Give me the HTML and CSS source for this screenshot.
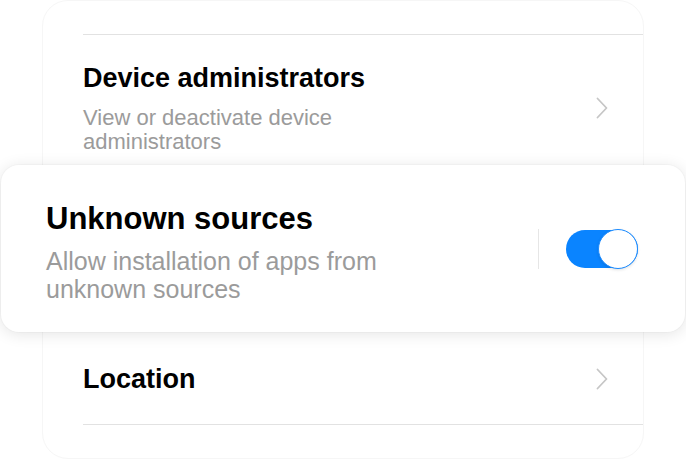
FILE: index.html
```html
<!DOCTYPE html>
<html>

<head>
  <title>Security settings</title>
  <link rel="stylesheet" href="styles.css">
</head>

<body>
  <div class="screen">
    <section class="list">
      <div class="row row-top"></div>
      <div class="row">
        <div class="row-text">
          <h2>Device administrators</h2>
          <p>View or deactivate device administrators</p>
        </div>
        <svg class="chevron" width="12" height="22" viewBox="0 0 12 22">
          <path d="M1.5 1.5 L10.5 11 L1.5 20.5" fill="none" stroke="#c6c6c6" stroke-width="1.8" stroke-linecap="round" stroke-linejoin="round" />
        </svg>
      </div>
      <div class="row row-hidden"></div>
      <div class="row row-single">
        <div class="row-text">
          <h2>Location</h2>
        </div>
        <svg class="chevron" width="12" height="22" viewBox="0 0 12 22">
          <path d="M1.5 1.5 L10.5 11 L1.5 20.5" fill="none" stroke="#c6c6c6" stroke-width="1.8" stroke-linecap="round" stroke-linejoin="round" />
        </svg>
      </div>
    </section>

    <div class="lifted">
      <div class="lifted-text">
        <h2>Unknown sources</h2>
        <p>Allow installation of apps from unknown sources</p>
      </div>
      <span class="separator"></span>
      <label class="toggle">
        <input type="checkbox" checked>
        <span class="knob"></span>
      </label>
    </div>
  </div>
</body>

</html>
```

FILE: styles.css
```css
*, *::before, *::after {
  box-sizing: border-box;
}
body {
  margin: 0;
  background: #fff;
  font-family: 'Liberation Sans', Arial, sans-serif;
}
h2, p {
  margin: 0;
}

.screen {
  position: relative;
  height: 460px;
  overflow: hidden;
}

.list {
  margin: 0 42px;
  height: 459px;
  padding-left: 40px;
  background: #fff;
  border: 1px solid #f6f6f6;
  border-radius: 26px;
}

.row {
  display: flex;
  align-items: center;
  padding: 27px 35px 27px 0;
}
.row-top {
  height: 34px;
  padding: 0;
  border-bottom: 1px solid #e2e2e2;
}
.row-hidden {
  height: 153px;
  padding: 0;
}
.row-single {
  padding-top: 29px;
  padding-bottom: 29px;
  border-bottom: 1px solid #e2e2e2;
}

.row-text {
  flex: 1;
}
.row-text h2 {
  font-size: 27px;
  line-height: 32px;
  font-weight: bold;
  color: #000;
}
.row-text p {
  max-width: 330px;
  margin-top: 12px;
  font-size: 22px;
  line-height: 24px;
  color: #9b9b9b;
}

.chevron {
  flex: none;
  display: block;
}

.lifted {
  position: absolute;
  top: 165px;
  left: 1px;
  right: 1px;
  height: 167px;
  display: flex;
  align-items: center;
  padding: 0 47px 0 45px;
  background: #fff;
  border-radius: 18px;
  box-shadow: 0 2px 16px rgba(0, 0, 0, 0.11), 0 0 0 1px rgba(0, 0, 0, 0.02);
}
.lifted-text {
  flex: 1;
  padding-top: 6px;
}
.lifted-text h2 {
  font-size: 31px;
  line-height: 36px;
  font-weight: bold;
  color: #000;
}
.lifted-text p {
  max-width: 380px;
  margin-top: 10px;
  font-size: 25px;
  line-height: 28px;
  color: #9b9b9b;
}

.separator {
  width: 1px;
  height: 40px;
  margin-right: 27px;
  background: #e6e6e6;
}

.toggle {
  position: relative;
  display: block;
  width: 72px;
  height: 38px;
  border-radius: 19px;
  background: #0a84ff;
}
.toggle input {
  display: none;
}
.knob {
  position: absolute;
  top: -1px;
  right: 0;
  width: 40px;
  height: 40px;
  border-radius: 50%;
  background: #fff;
  border: 1.5px solid #1b8bff;
  box-shadow: 0 1px 3px rgba(0, 0, 0, 0.12);
}
```
